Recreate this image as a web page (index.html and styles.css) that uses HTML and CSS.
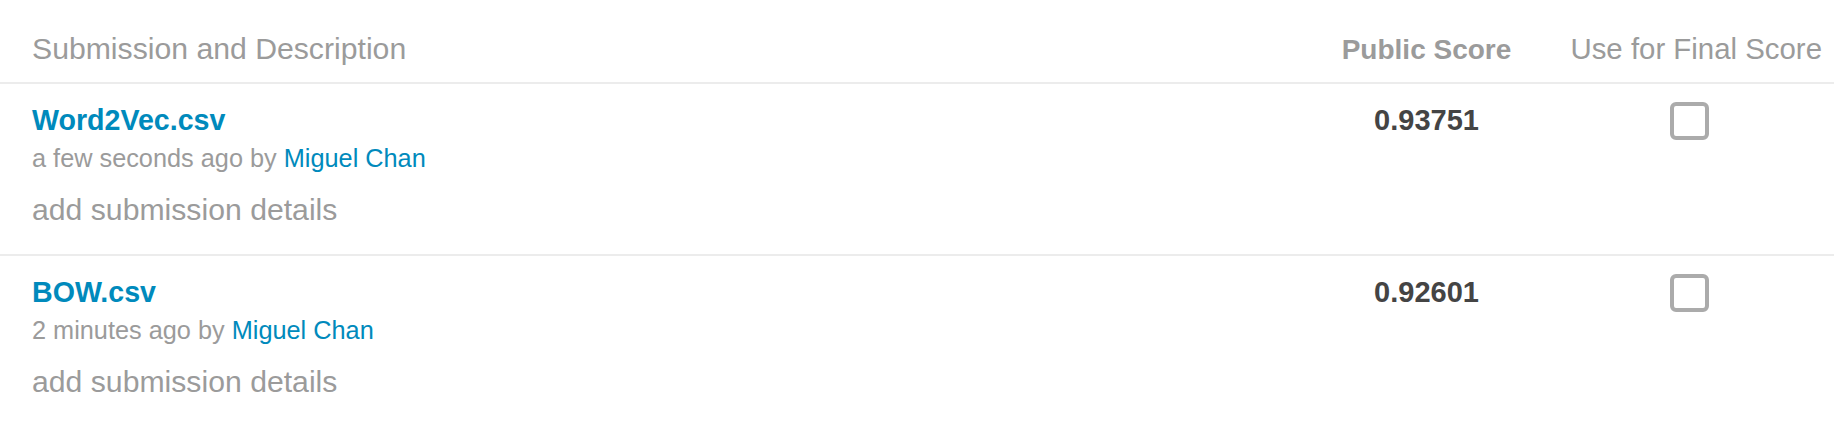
FILE: index.html
```html
<!DOCTYPE html>
<html lang="en">
<head>
<meta charset="utf-8">
<title>Submissions</title>
<link rel="stylesheet" href="styles.css">
</head>
<body>
<div class="subs">
  <div class="row head">
    <div class="c-desc">Submission and Description</div>
    <div class="c-score"><span class="bold">Public Score</span></div>
    <div class="c-final">Use for Final Score</div>
  </div>
  <div class="row item">
    <div class="c-desc">
      <a class="fname" href="#">Word2Vec.csv</a>
      <div class="meta">a few seconds ago by <a class="user" href="#">Miguel Chan</a></div>
      <div class="details">add submission details</div>
    </div>
    <div class="c-score score">0.93751</div>
    <div class="c-final"><span class="check"></span></div>
  </div>
  <div class="row item">
    <div class="c-desc">
      <a class="fname" href="#">BOW.csv</a>
      <div class="meta">2 minutes ago by <a class="user" href="#">Miguel Chan</a></div>
      <div class="details">add submission details</div>
    </div>
    <div class="c-score score">0.92601</div>
    <div class="c-final"><span class="check"></span></div>
  </div>
</div>
</body>
</html>
```

FILE: styles.css
```css
html, body {
  margin: 0;
  padding: 0;
  background: #ffffff;
}
body {
  font-family: "Liberation Sans", Arial, Helvetica, sans-serif;
  color: #999999;
}
.subs {
  width: 100%;
}
.row {
  display: grid;
  grid-template-columns: 1fr 171px 257px;
  column-gap: 53px;
  padding-left: 32px;
  padding-right: 12px;
  border-bottom: 2px solid #ececec;
}
.head {
  padding-top: 31px;
  padding-bottom: 14px;
  font-size: 30.2px;
  line-height: 36px;
  color: #9b9b9b;
  align-items: baseline;
}
.head .c-score {
  text-align: center;
}
.head .bold {
  font-weight: bold;
  font-size: 28px;
}
.head .c-final {
  text-align: right;
  font-size: 29.4px;
}
.item {
  padding-top: 19px;
  padding-bottom: 26px;
  align-items: start;
}
.fname {
  display: block;
  font-weight: bold;
  font-size: 28.6px;
  line-height: 34px;
  color: #008abc;
  text-decoration: none;
}
.meta {
  margin-top: 6px;
  font-size: 25.3px;
  line-height: 30px;
  color: #9b9b9b;
}
.user {
  color: #008abc;
  text-decoration: none;
}
.details {
  margin-top: 19px;
  font-size: 30.2px;
  line-height: 36px;
  color: #9b9b9b;
}
.score {
  text-align: center;
  font-weight: bold;
  font-size: 29px;
  line-height: 34px;
  color: #444444;
}
.item .c-final {
  display: flex;
  padding-left: 105px;
  margin-top: -1px;
}
.check {
  display: block;
  width: 31px;
  height: 30px;
  border: 4px solid #ababab;
  border-radius: 6px;
  background: #ffffff;
}
```
